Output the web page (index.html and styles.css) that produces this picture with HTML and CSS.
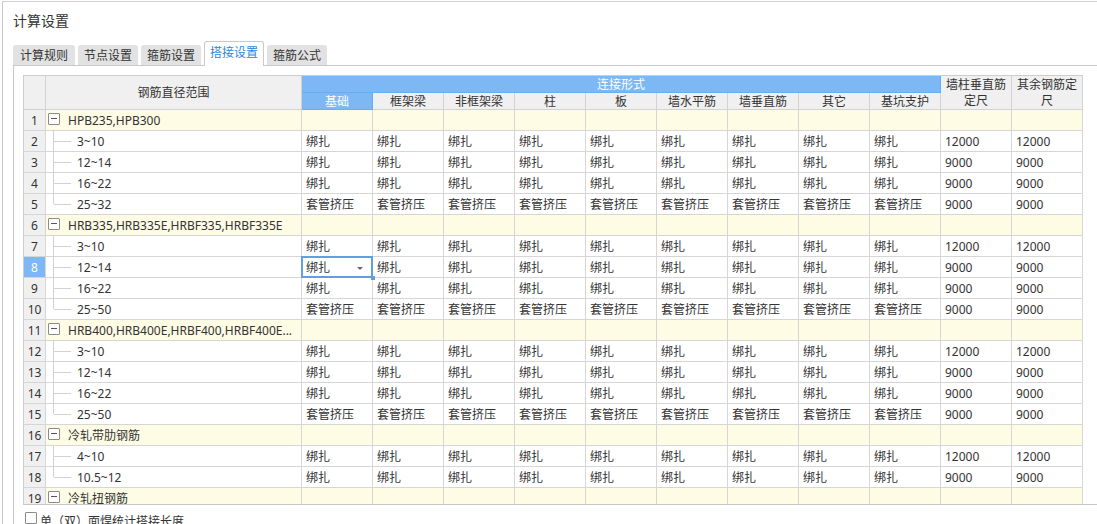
FILE: index.html
```html
<!DOCTYPE html>
<html lang="zh-CN">
<head>
<meta charset="utf-8">
<title>计算设置</title>
<link rel="stylesheet" href="styles.css">
</head>
<body>
<div class="dialog">
  <div class="title">计算设置</div>
  <div class="tabs">
    <div class="tab first">计算规则</div>
    <div class="tab">节点设置</div>
    <div class="tab">箍筋设置</div>
    <div class="tab active">搭接设置</div>
    <div class="tab">箍筋公式</div>
  </div>
  <div class="panel">
    <div class="viewport">
      <div class="grid">
        <div class="h rnh"></div>
        <div class="h nmh">钢筋直径范围</div>
        <div class="h blue conn">连接形式</div>
        <div class="h c12">墙柱垂直筋定尺</div>
        <div class="h c13">其余钢筋定尺</div>
        <div class="h blue r2">基础</div>
        <div class="h r2">框架梁</div>
        <div class="h r2">非框架梁</div>
        <div class="h r2">柱</div>
        <div class="h r2">板</div>
        <div class="h r2">墙水平筋</div>
        <div class="h r2">墙垂直筋</div>
        <div class="h r2">其它</div>
        <div class="h r2">基坑支护</div>

        <div class="row grp"><div class="rn">1</div><div class="nm g"><span class="tog"></span>HPB235,HPB300</div><div class="c"></div><div class="c"></div><div class="c"></div><div class="c"></div><div class="c"></div><div class="c"></div><div class="c"></div><div class="c"></div><div class="c"></div><div class="c"></div><div class="c"></div></div>
        <div class="row"><div class="rn">2</div><div class="nm ch">3~10</div><div class="c">绑扎</div><div class="c">绑扎</div><div class="c">绑扎</div><div class="c">绑扎</div><div class="c">绑扎</div><div class="c">绑扎</div><div class="c">绑扎</div><div class="c">绑扎</div><div class="c">绑扎</div><div class="c">12000</div><div class="c">12000</div></div>
        <div class="row"><div class="rn">3</div><div class="nm ch">12~14</div><div class="c">绑扎</div><div class="c">绑扎</div><div class="c">绑扎</div><div class="c">绑扎</div><div class="c">绑扎</div><div class="c">绑扎</div><div class="c">绑扎</div><div class="c">绑扎</div><div class="c">绑扎</div><div class="c">9000</div><div class="c">9000</div></div>
        <div class="row"><div class="rn">4</div><div class="nm ch">16~22</div><div class="c">绑扎</div><div class="c">绑扎</div><div class="c">绑扎</div><div class="c">绑扎</div><div class="c">绑扎</div><div class="c">绑扎</div><div class="c">绑扎</div><div class="c">绑扎</div><div class="c">绑扎</div><div class="c">9000</div><div class="c">9000</div></div>
        <div class="row"><div class="rn">5</div><div class="nm ch last">25~32</div><div class="c">套管挤压</div><div class="c">套管挤压</div><div class="c">套管挤压</div><div class="c">套管挤压</div><div class="c">套管挤压</div><div class="c">套管挤压</div><div class="c">套管挤压</div><div class="c">套管挤压</div><div class="c">套管挤压</div><div class="c">9000</div><div class="c">9000</div></div>

        <div class="row grp"><div class="rn">6</div><div class="nm g"><span class="tog"></span>HRB335,HRB335E,HRBF335,HRBF335E</div><div class="c"></div><div class="c"></div><div class="c"></div><div class="c"></div><div class="c"></div><div class="c"></div><div class="c"></div><div class="c"></div><div class="c"></div><div class="c"></div><div class="c"></div></div>
        <div class="row"><div class="rn">7</div><div class="nm ch">3~10</div><div class="c">绑扎</div><div class="c">绑扎</div><div class="c">绑扎</div><div class="c">绑扎</div><div class="c">绑扎</div><div class="c">绑扎</div><div class="c">绑扎</div><div class="c">绑扎</div><div class="c">绑扎</div><div class="c">12000</div><div class="c">12000</div></div>
        <div class="row"><div class="rn sel">8</div><div class="nm ch">12~14</div><div class="c edit">绑扎<span class="frame"></span><span class="arrow"></span><span class="handle"></span></div><div class="c">绑扎</div><div class="c">绑扎</div><div class="c">绑扎</div><div class="c">绑扎</div><div class="c">绑扎</div><div class="c">绑扎</div><div class="c">绑扎</div><div class="c">绑扎</div><div class="c">9000</div><div class="c">9000</div></div>
        <div class="row"><div class="rn">9</div><div class="nm ch">16~22</div><div class="c">绑扎</div><div class="c">绑扎</div><div class="c">绑扎</div><div class="c">绑扎</div><div class="c">绑扎</div><div class="c">绑扎</div><div class="c">绑扎</div><div class="c">绑扎</div><div class="c">绑扎</div><div class="c">9000</div><div class="c">9000</div></div>
        <div class="row"><div class="rn">10</div><div class="nm ch last">25~50</div><div class="c">套管挤压</div><div class="c">套管挤压</div><div class="c">套管挤压</div><div class="c">套管挤压</div><div class="c">套管挤压</div><div class="c">套管挤压</div><div class="c">套管挤压</div><div class="c">套管挤压</div><div class="c">套管挤压</div><div class="c">9000</div><div class="c">9000</div></div>

        <div class="row grp"><div class="rn">11</div><div class="nm g"><span class="tog"></span>HRB400,HRB400E,HRBF400,HRBF400E...</div><div class="c"></div><div class="c"></div><div class="c"></div><div class="c"></div><div class="c"></div><div class="c"></div><div class="c"></div><div class="c"></div><div class="c"></div><div class="c"></div><div class="c"></div></div>
        <div class="row"><div class="rn">12</div><div class="nm ch">3~10</div><div class="c">绑扎</div><div class="c">绑扎</div><div class="c">绑扎</div><div class="c">绑扎</div><div class="c">绑扎</div><div class="c">绑扎</div><div class="c">绑扎</div><div class="c">绑扎</div><div class="c">绑扎</div><div class="c">12000</div><div class="c">12000</div></div>
        <div class="row"><div class="rn">13</div><div class="nm ch">12~14</div><div class="c">绑扎</div><div class="c">绑扎</div><div class="c">绑扎</div><div class="c">绑扎</div><div class="c">绑扎</div><div class="c">绑扎</div><div class="c">绑扎</div><div class="c">绑扎</div><div class="c">绑扎</div><div class="c">9000</div><div class="c">9000</div></div>
        <div class="row"><div class="rn">14</div><div class="nm ch">16~22</div><div class="c">绑扎</div><div class="c">绑扎</div><div class="c">绑扎</div><div class="c">绑扎</div><div class="c">绑扎</div><div class="c">绑扎</div><div class="c">绑扎</div><div class="c">绑扎</div><div class="c">绑扎</div><div class="c">9000</div><div class="c">9000</div></div>
        <div class="row"><div class="rn">15</div><div class="nm ch last">25~50</div><div class="c">套管挤压</div><div class="c">套管挤压</div><div class="c">套管挤压</div><div class="c">套管挤压</div><div class="c">套管挤压</div><div class="c">套管挤压</div><div class="c">套管挤压</div><div class="c">套管挤压</div><div class="c">套管挤压</div><div class="c">9000</div><div class="c">9000</div></div>

        <div class="row grp"><div class="rn">16</div><div class="nm g"><span class="tog"></span>冷轧带肋钢筋</div><div class="c"></div><div class="c"></div><div class="c"></div><div class="c"></div><div class="c"></div><div class="c"></div><div class="c"></div><div class="c"></div><div class="c"></div><div class="c"></div><div class="c"></div></div>
        <div class="row"><div class="rn">17</div><div class="nm ch">4~10</div><div class="c">绑扎</div><div class="c">绑扎</div><div class="c">绑扎</div><div class="c">绑扎</div><div class="c">绑扎</div><div class="c">绑扎</div><div class="c">绑扎</div><div class="c">绑扎</div><div class="c">绑扎</div><div class="c">12000</div><div class="c">12000</div></div>
        <div class="row"><div class="rn">18</div><div class="nm ch last">10.5~12</div><div class="c">绑扎</div><div class="c">绑扎</div><div class="c">绑扎</div><div class="c">绑扎</div><div class="c">绑扎</div><div class="c">绑扎</div><div class="c">绑扎</div><div class="c">绑扎</div><div class="c">绑扎</div><div class="c">9000</div><div class="c">9000</div></div>

        <div class="row grp"><div class="rn">19</div><div class="nm g"><span class="tog"></span>冷轧扭钢筋</div><div class="c"></div><div class="c"></div><div class="c"></div><div class="c"></div><div class="c"></div><div class="c"></div><div class="c"></div><div class="c"></div><div class="c"></div><div class="c"></div><div class="c"></div></div>
      </div>
    </div>
    <label class="check"><span class="box"></span><span class="label">单（双）面焊统计搭接长度</span></label>
  </div>
</div>
</body>
</html>
```

FILE: styles.css
```css
* { box-sizing: border-box; }
html, body { margin: 0; padding: 0; }
body {
  width: 1097px;
  height: 524px;
  overflow: hidden;
  background: #ffffff;
  font-family: "Noto Sans", "Noto Sans CJK SC", sans-serif;
  font-size: 12px;
  color: #333333;
}
.dialog {
  margin: 1px 0 0 2px;
  border-left: 1px solid #c9c9c9;
  border-top: 1px solid #d2d2d2;
  height: 523px;
  background: #ffffff;
}
.title {
  height: 39px;
  line-height: 37px;
  padding-left: 10px;
  font-size: 14px;
  color: #333333;
}
.tabs {
  height: 24px;
  display: flex;
  align-items: flex-end;
  gap: 3px;
  padding-left: 10px;
}
.tab {
  width: 60px;
  height: 20px;
  line-height: 21px;
  text-align: center;
  background: #e2e2e2;
  border-radius: 3px 3px 0 0;
  color: #333333;
}
.tab.first { width: 62px; }
.tab.active {
  position: relative;
  z-index: 1;
  height: 25px;
  margin-bottom: -1px;
  line-height: 22px;
  background: #ffffff;
  border: 1px solid #c9c9c9;
  border-bottom: none;
  color: #2b87de;
}
.panel {
  margin-left: 10px;
  border-left: 1px solid #c9c9c9;
  border-top: 1px solid #c9c9c9;
  padding: 9px 0 0 9px;
  height: 460px;
}
.viewport {
  height: 430px;
  border-bottom: 1px solid #c9c9c9;
  overflow: hidden;
}
.grid {
  display: grid;
  grid-template-columns: 22px 256px repeat(11, 71px);
  grid-template-rows: 17px 17px;
  grid-auto-rows: 21px;
  width: max-content;
  border-top: 1px solid #cdcdcd;
  border-left: 1px solid #cdcdcd;
}
.row { display: contents; }
.h,
.row > div {
  border-right: 1px solid #d6d6d6;
  border-bottom: 1px solid #d6d6d6;
  white-space: nowrap;
  overflow: hidden;
}
.h {
  background: #f0f0f0;
  display: flex;
  align-items: center;
  justify-content: center;
  text-align: center;
  line-height: 16px;
  padding: 1px 4px 0;
  white-space: normal;
  border-color: #d2d2d2;
}
.h.blue {
  background: #7db8f5;
  color: #ffffff;
  border-color: #6aacf0;
}
.rnh { grid-column: 1; grid-row: 1 / 3; }
.nmh { grid-column: 2; grid-row: 1 / 3; }
.conn { grid-column: 3 / span 9; grid-row: 1; }
.c12 { grid-column: 12; grid-row: 1 / 3; }
.c13 { grid-column: 13; grid-row: 1 / 3; }
.r2 { grid-row: 2; }

.rn {
  background: #f0f0f0;
  text-align: center;
  line-height: 21px;
}
.rn.sel { background: #7db8f5; color: #ffffff; }
.c {
  padding: 0 4px;
  line-height: 21px;
}
.nm { line-height: 21px; }
.grp > .c,
.grp > .nm { background: #fffce6; }
.nm.g {
  display: flex;
  align-items: center;
  padding-left: 2px;
}
.tog {
  flex: none;
  position: relative;
  width: 12px;
  height: 12px;
  margin: -2px 8px 0 0;
  border: 1px solid #8c8c8c;
  border-radius: 1px;
  background: #ffffff;
}
.tog::after {
  content: "";
  position: absolute;
  left: 2px;
  width: 6px;
  top: 4px;
  height: 1px;
  background: #555555;
}
.nm.ch {
  position: relative;
  padding-left: 31px;
}
.nm.ch::before {
  content: "";
  position: absolute;
  left: 7px;
  top: 0;
  bottom: 0;
  width: 1px;
  background: #d2d2d2;
}
.nm.ch.last::before { bottom: auto; height: 10px; }
.nm.ch::after {
  content: "";
  position: absolute;
  left: 8px;
  top: 10px;
  width: 17px;
  height: 1px;
  background: #d2d2d2;
}
.c.edit {
  position: relative;
  overflow: visible;
  z-index: 2;
}
.frame {
  position: absolute;
  left: -1px;
  top: -1px;
  width: 72px;
  height: 22px;
  border: 2px solid #5e9fe6;
}
.arrow {
  position: absolute;
  left: 55px;
  top: 10px;
  width: 0;
  height: 0;
  border-left: 3px solid transparent;
  border-right: 3px solid transparent;
  border-top: 3px solid #666666;
}
.handle {
  position: absolute;
  left: 69px;
  top: 19px;
  width: 4px;
  height: 4px;
  background: #5e9fe6;
}
.check {
  display: flex;
  align-items: flex-start;
  margin-top: 7px;
  padding-left: 2px;
  height: 19px;
  color: #333333;
}
.box {
  flex: none;
  width: 12px;
  height: 12px;
  margin-right: 3px;
  border: 1px solid #8a8a8a;
  border-radius: 1px;
  background: #ffffff;
}
.label {
  line-height: 19px;
  margin-top: 0;
}
```
